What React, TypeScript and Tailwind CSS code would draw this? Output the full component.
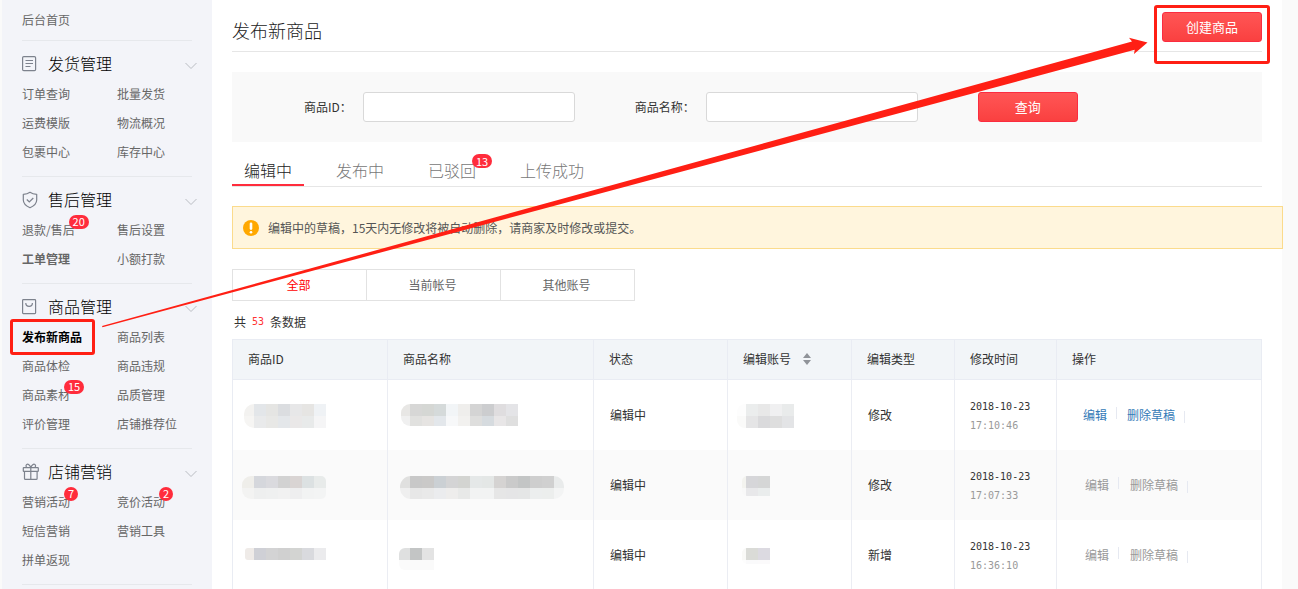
import React from "react";

type NavItem = { label: string; badge?: string; bold?: boolean; active?: boolean };
type NavSection = { title: string; icon: React.ReactNode; items: NavItem[] };

const iconClass = "h-[18px] w-[18px] shrink-0 fill-none stroke-[#7d828d]";

const DocIcon = () => (
  <svg viewBox="0 0 18 18" className={iconClass} strokeWidth="1.2" aria-hidden="true">
    <rect x="0.6" y="1.6" width="13" height="14" rx="1.2" />
    <path d="M3.5 5.5h7.5M3.5 8.5h7.5M3.5 11.5h5" />
  </svg>
);

const ShieldIcon = () => (
  <svg viewBox="0 0 18 18" className={iconClass} strokeWidth="1.2" aria-hidden="true">
    <path d="M8 1.3C6 2.8 4 3.3 1.3 3.3V9c0 3.800 2.900 6 6.700 7.700C11.800 15 14.700 12.800 14.700 9V3.300C12 3.300 10 2.800 8 1.300z" strokeLinejoin="round" />
    <path d="M4.800 8.500l2.500 2.500 4-4" />
  </svg>
);

const BagIcon = () => (
  <svg viewBox="0 0 18 18" className={iconClass} strokeWidth="1.2" aria-hidden="true">
    <rect x="0.6" y="1.6" width="13" height="14" rx="0.8" />
    <path d="M3.800 5c0 2.200 1.300 3.400 3.300 3.400s3.300-1.200 3.300-3.400" />
  </svg>
);

const GiftIcon = () => (
  <svg viewBox="0 0 18 18" className={iconClass} strokeWidth="1.2" aria-hidden="true">
    <rect x="1.3" y="4.600" width="15" height="3.800" rx="0.5" />
    <path d="M2.500 8.400v7.100c0 .6.3.9.9.9h10.800c.6 0 .9-.3.9-.9V8.400M8.800 4.600v11.800" />
    <path d="M8.800 4.600C7.800 1.800 6 .7 4.700 1.500 3.600 2.200 3.900 3.900 5 4.600M8.800 4.600c1-2.800 2.800-3.900 4.100-3.100 1.100.7.800 2.400-.3 3.100" />
  </svg>
);

const sections: NavSection[] = [
  {
    title: "发货管理",
    icon: <DocIcon />,
    items: [
      { label: "订单查询" },
      { label: "批量发货" },
      { label: "运费模版" },
      { label: "物流概况" },
      { label: "包裹中心" },
      { label: "库存中心" },
    ],
  },
  {
    title: "售后管理",
    icon: <ShieldIcon />,
    items: [
      { label: "退款/售后", badge: "20" },
      { label: "售后设置" },
      { label: "工单管理", bold: true },
      { label: "小额打款" },
    ],
  },
  {
    title: "商品管理",
    icon: <BagIcon />,
    items: [
      { label: "发布新商品", active: true },
      { label: "商品列表" },
      { label: "商品体检" },
      { label: "商品违规" },
      { label: "商品素材", badge: "15" },
      { label: "品质管理" },
      { label: "评价管理" },
      { label: "店铺推荐位" },
    ],
  },
  {
    title: "店铺营销",
    icon: <GiftIcon />,
    items: [
      { label: "营销活动", badge: "7" },
      { label: "竞价活动", badge: "2" },
      { label: "短信营销" },
      { label: "营销工具" },
      { label: "拼单返现" },
    ],
  },
];

function Badge({ text, className }: { text: string; className: string }) {
  return (
    <span
      className={`absolute left-full flex h-3.5 items-center justify-center rounded-full bg-[#ff2c3c] text-[11px] leading-none font-normal text-white ${
        text.length > 1 ? "w-5" : "w-3.5"
      } ${className}`}
    >
      {text}
    </span>
  );
}

function Highlight({ className }: { className: string }) {
  return (
    <span
      aria-hidden="true"
      className={`pointer-events-none absolute rounded-[3px] border-3 border-[#ff1f14] ${className}`}
    />
  );
}

function Sidebar() {
  return (
    <aside className="ml-0.5 w-[210px] shrink-0 bg-[#f3f4f9] pr-[15px] pl-5 text-xs text-[#666]">
      <div className="flex h-10 items-center">
        <a href="#home">后台首页</a>
      </div>
      {sections.map((s) => (
        <section key={s.title} className="pb-2.5">
          <hr className="mr-[5px] mb-2 border-[#e6e8ec]" />
          <button type="button" className="flex h-[30px] w-full items-center text-base font-light text-black">
            {s.icon}
            <span className="ml-2 pb-0.5">{s.title}</span>
            <svg viewBox="0 0 12 8" className="mt-1 ml-auto h-2 w-3 fill-none stroke-[#b9bcc2]" aria-hidden="true">
              <path d="M0.500 1l5.500 5.500L11.500 1" />
            </svg>
          </button>
          <ul className="grid grid-cols-[95px_1fr]">
            {s.items.map((it) => (
              <li key={it.label} className="flex h-[29px] items-center">
                <a
                  href={`#${it.label}`}
                  className={`relative leading-[18px] whitespace-nowrap ${
                    it.active ? "font-bold text-black" : it.bold ? "font-bold" : ""
                  }`}
                >
                  {it.label}
                  {it.badge && <Badge text={it.badge} className="-top-1.5 -ml-1.5" />}
                  {it.active && <Highlight className="-top-[9px] -right-[13px] -bottom-[9px] -left-3" />}
                </a>
              </li>
            ))}
          </ul>
        </section>
      ))}
      <hr className="mr-[5px] border-[#e6e8ec]" />
    </aside>
  );
}

function RedButton({ children }: { children: React.ReactNode }) {
  return (
    <button
      type="button"
      className="h-[30px] w-[100px] shrink-0 rounded-[3px] border border-[#fb2c40] bg-linear-to-b from-[#ff5555] to-[#fa4040] pb-0.5 text-[13px] leading-none text-white"
    >
      {children}
    </button>
  );
}

function Field({ id, label }: { id: string; label: string }) {
  return (
    <div className="flex items-center gap-[11px]">
      <label htmlFor={id} className="text-xs text-[#333]">
        {label}
      </label>
      <input
        id={id}
        type="text"
        className="h-[30px] w-[212px] rounded-[3px] border border-[#d9d9d9] bg-white px-2 text-xs"
      />
    </div>
  );
}

const tabs = [
  { label: "编辑中", active: true },
  { label: "发布中" },
  { label: "已驳回", badge: "13" },
  { label: "上传成功" },
];

/* Censored cells: each row is a list of 12px blocks; r and rr round the left and right ends. */
type Mosaic = { y: number; left: number; right: number; h: number; r: number; rr?: number; rows: string[][] };

const mosaics: Mosaic[][] = [
  [
    {
      y: 24, left: 2, right: 84, h: 24, r: 10,
      rows: [
        ["#f3f2f0", "#e3e6e9", "#e5e5e3", "#dbdde0", "#e7e7e8", "#e6e5e3", "#eff2f5"],
        ["#f6f5f3", "#e9eaeb", "#e8e8e6", "#e4e7ea", "#eae8e8", "#e8eaea", "#f5f5f6"],
      ],
    },
    {
      y: 24, left: 3, right: 120, h: 22, r: 9,
      rows: [
        ["#e8e7e5", "#d7d7d6", "#d5d7d4", "#d5dada", "#f2f5f7", "#efeeec", "#d4d4d4", "#cccdcf", "#dfdddf", "#e4e4e7"],
        ["#f0f0f0", "#e1e1df", "#e6e4e2", "#e3e7eb", "#f7f8f9", "#f2f1ef", "#dededd", "#d6dbdf", "#e8e6e7", "#dfdfdf"],
      ],
    },
    {
      y: 24, left: 3, right: 60, h: 24, r: 8,
      rows: [
        ["#fdfdfd", "#ebeded", "#e8e8e8", "#f0f0f1", "#e9ebeb"],
        ["#fafaf9", "#e5e5e6", "#dadadc", "#dedede", "#e3e4e6"],
      ],
    },
  ],
  [
    {
      y: 26, left: 0, right: 84, h: 23, r: 9, rr: 5,
      rows: [
        ["#efeeea", "#d5d7dc", "#dadade", "#d2d2d2", "#d9d4d3", "#dce1e2", "#e8ebea"],
        ["#f3f3f2", "#eeefef", "#eff0f0", "#f1f1f1", "#eeeeef", "#f2f3f3", "#f3f4f4"],
      ],
    },
    {
      y: 26, left: 2, right: 166, h: 23, r: 11, rr: 10,
      rows: [
        ["#e0e0df", "#c8c8c8", "#cac9c8", "#cbd0d4", "#d4d4d5", "#d3d4d1", "#e5e8e8", "#e4e7e6", "#d5d3d2", "#cacaca", "#c3c5c5", "#cecece", "#d0d0d0", "#e9ebeb"],
        ["#efefef", "#e7e7e7", "#e9e9e9", "#ebecee", "#eeedec", "#e8e9e8", "#f2f3f3", "#f2f3f3", "#e6e6e6", "#e5e5e6", "#e5e6e6", "#eceeee", "#eceeed", "#f3f4f4"],
      ],
    },
    {
      y: 26, left: 8, right: 36, h: 20, r: 5,
      rows: [
        ["#f3f3ef", "#d6d6d9", "#d5d6d6"],
        ["#f8f8f8", "#e8e8ea", "#eaeded"],
      ],
    },
  ],
  [
    {
      y: 28, left: 3, right: 84, h: 12, r: 3,
      rows: [["#efebe8", "#cfd0d6", "#d3d3d4", "#d0d0d0", "#d3d4d2", "#d9dade", "#ebebed"]],
    },
    {
      y: 28, left: 1, right: 36, h: 22, r: 6,
      rows: [
        ["#dfe0e0", "#c3c5c5", "#e3e3e3"],
        ["#fbfbfb", "#fafafa", "#fafafa"],
      ],
    },
    {
      y: 28, left: 8, right: 36, h: 16, r: 5,
      rows: [
        ["#f9f9f7", "#dadbd7", "#dcdae1"],
        ["#fdfdfd", "#fafafb", "#fbfafb"],
      ],
    },
  ],
];

function MosaicCell({ mosaic, id, className }: { mosaic: Mosaic; id: string; className: string }) {
  const { y, left, right, h, r, rr = 0, rows } = mosaic;
  const outline = [
    `M${left + r} ${y}H${right - rr}`,
    `a${rr} ${rr} 0 0 1 ${rr} ${rr}V${y + h - rr}`,
    `a${rr} ${rr} 0 0 1 ${-rr} ${rr}H${left + r}`,
    `a${r} ${r} 0 0 1 ${-r} ${-r}V${y + r}`,
    `a${r} ${r} 0 0 1 ${r} ${-r}z`,
  ].join("");
  return (
    <svg height="70" className={`block max-w-none ${className}`} aria-hidden="true">
      <clipPath id={id}>
        <path d={outline} />
      </clipPath>
      <g clipPath={`url(#${id})`}>
        {rows.map((row, j) =>
          row.map((fill, i) => <rect key={`${i}-${j}`} x={i * 12} y={y + j * 12} width="12" height="12" fill={fill} />)
        )}
      </g>
    </svg>
  );
}

const rows = [
  { type: "修改", time: "17:10:46", editable: true },
  { type: "修改", time: "17:07:33", editable: false },
  { type: "新增", time: "16:36:10", editable: false },
];

const th = "border-y border-r border-[#e9ecf3] pt-0 pb-0.5 pl-[15px] text-left font-normal";
const td = "border-r border-[#ebedf3] p-0";

function Actions({ editable }: { editable: boolean }) {
  if (editable) {
    return (
      <div className="flex h-4 items-center pl-[26px] text-[#337ab7]">
        <a href="#edit">编辑</a>
        <span className="mr-2.5 ml-[9px] h-3 w-px self-start bg-[#e6e9f1]" />
        <a href="#delete">删除草稿</a>
        <span className="ml-[9px] h-3 w-px self-end bg-[#e6e9f1]" />
      </div>
    );
  }
  return (
    <div className="flex h-4 items-center pl-7 text-[#999]">
      <button type="button" disabled>编辑</button>
      <span className="mr-[11px] ml-[9px] h-3 w-px self-start bg-[#e6e9f1]" />
      <button type="button" disabled>删除草稿</button>
      <span className="ml-[9px] h-3 w-px self-end bg-[#e6e9f1]" />
    </div>
  );
}

function DraftTable() {
  return (
    <table className="w-full table-fixed border-separate border-spacing-0 border-l border-[#e9ecf3] text-xs text-[#333]">
      <colgroup>
        <col className="w-[155px]" />
        <col className="w-[206px]" />
        <col className="w-[134px]" />
        <col className="w-[124px]" />
        <col className="w-[103px]" />
        <col className="w-[102px]" />
        <col />
      </colgroup>
      <thead>
        <tr className="h-[41px] bg-[#f2f5f8]">
          <th className={th}>商品ID</th>
          <th className={th}>商品名称</th>
          <th className={th}>状态</th>
          <th className={th}>
            <button type="button" className="flex items-center gap-3">
              编辑账号
              <svg viewBox="0 0 8 12" className="h-3 w-2 fill-[#909399]" aria-hidden="true">
                <path d="M0 5l4-5 4 5zM0 7h8l-4 5z" />
              </svg>
            </button>
          </th>
          <th className={th}>编辑类型</th>
          <th className={th}>修改时间</th>
          <th className={th}>操作</th>
        </tr>
      </thead>
      <tbody>
        {rows.map((row, i) => (
          <tr key={row.time} className="h-[70px] even:bg-[#fafafa]">
            <td className={td}>
              <MosaicCell id={`id-${i}`} mosaic={mosaics[i][0]} className="ml-[9px] w-[90px]" />
            </td>
            <td className={td}>
              <MosaicCell id={`name-${i}`} mosaic={mosaics[i][1]} className="ml-2.5 w-[170px]" />
            </td>
            <td className={td}>
              <span className="pl-4">编辑中</span>
            </td>
            <td className={td}>
              <MosaicCell id={`account-${i}`} mosaic={mosaics[i][2]} className="ml-1.5 w-16" />
            </td>
            <td className={td}>
              <span className="pl-4">{row.type}</span>
            </td>
            <td className={td}>
              <div className="pt-0.5 pl-[15px] font-['DejaVu_Sans_Mono',monospace] text-[10px] leading-[19px]">
                <div>2018-10-23</div>
                <div className="text-[#999]">{row.time}</div>
              </div>
            </td>
            <td className={td}>
              <Actions editable={row.editable} />
            </td>
          </tr>
        ))}
      </tbody>
    </table>
  );
}

export default function App() {
  return (
    <div className="relative flex min-h-screen bg-[#fafafa] font-['Noto_Sans_CJK_SC',sans-serif]">
      <Sidebar />

      <main className="mr-4 min-w-0 flex-1 bg-white px-5">
        <header className="flex h-[52px] items-start justify-between border-b border-[#e6e6e6] pt-3">
          <h1 className="text-lg leading-9 font-light text-[#222]">发布新商品</h1>
          <div className="relative flex">
            <RedButton>创建商品</RedButton>
            <Highlight className="-inset-x-2 -top-[7px] -bottom-[22px]" />
          </div>
        </header>

        <form
          className="mt-5 flex h-[70px] items-center gap-[60px] bg-[#f9f9f9] pl-[72px]"
          onSubmit={(e) => e.preventDefault()}
        >
          <Field id="goods-id" label="商品ID：" />
          <Field id="goods-name" label="商品名称：" />
          <RedButton>查询</RedButton>
        </form>

        <nav className="flex h-[45px] items-end gap-5 border-b border-[#e6e6e6]">
          {tabs.map((t) => (
            <button
              key={t.label}
              type="button"
              className={`h-[30px] border-b-2 px-3 text-base leading-7 font-light ${
                t.active ? "border-[#ff2c3c] text-[#222]" : "border-transparent text-[#777]"
              }`}
            >
              <span className="relative inline-block">
                {t.label}
                {t.badge && <Badge text={t.badge} className="-top-0.5 -ml-1" />}
              </span>
            </button>
          ))}
        </nav>

        <div className="mt-[19px] -mr-[21px] flex h-[43px] items-center gap-[9px] border border-[#fbdb8c] bg-[#fff5dd] pl-2.5 text-xs text-[#555]">
          <svg viewBox="0 0 16 16" className="h-4 w-4 fill-[#ffa800]" aria-hidden="true">
            <circle cx="8" cy="8" r="8" />
            <path d="M8 3.800v4.800" stroke="white" strokeWidth="2.600" strokeLinecap="round" />
            <circle cx="8" cy="12.200" r="1.300" fill="white" />
          </svg>
          <p>编辑中的草稿，15天内无修改将被自动删除，请商家及时修改或提交。</p>
        </div>

        <div className="mt-5 flex w-fit divide-x divide-[#e2e2e2] border border-[#e2e2e2] text-xs text-[#666]">
          <button type="button" className="h-[30px] w-[134px] pr-0.5 text-[#f00]">全部</button>
          <button type="button" className="h-[30px] w-[134px] pr-0.5">当前帐号</button>
          <button type="button" className="h-[30px] w-[133px] pr-0.5">其他账号</button>
        </div>

        <p className="flex h-[38px] items-center gap-1.5 pt-1 pl-0.5 text-xs text-[#333]">
          共
          <span className="font-['DejaVu_Sans_Mono',monospace] text-[10px] text-[#f33]">53</span>
          条数据
        </p>

        <DraftTable />
      </main>

      <svg
        viewBox="0 0 1298 589"
        preserveAspectRatio="none"
        className="pointer-events-none absolute top-0 left-0 h-[589px] w-full fill-[#ff1f14]"
        aria-hidden="true"
      >
        <path d="M102 326L1132 41.500 1129 37.700 1147.500 42.500 1134 54 1134.700 49.800 102.500 327.300z" />
      </svg>
    </div>
  );
}
